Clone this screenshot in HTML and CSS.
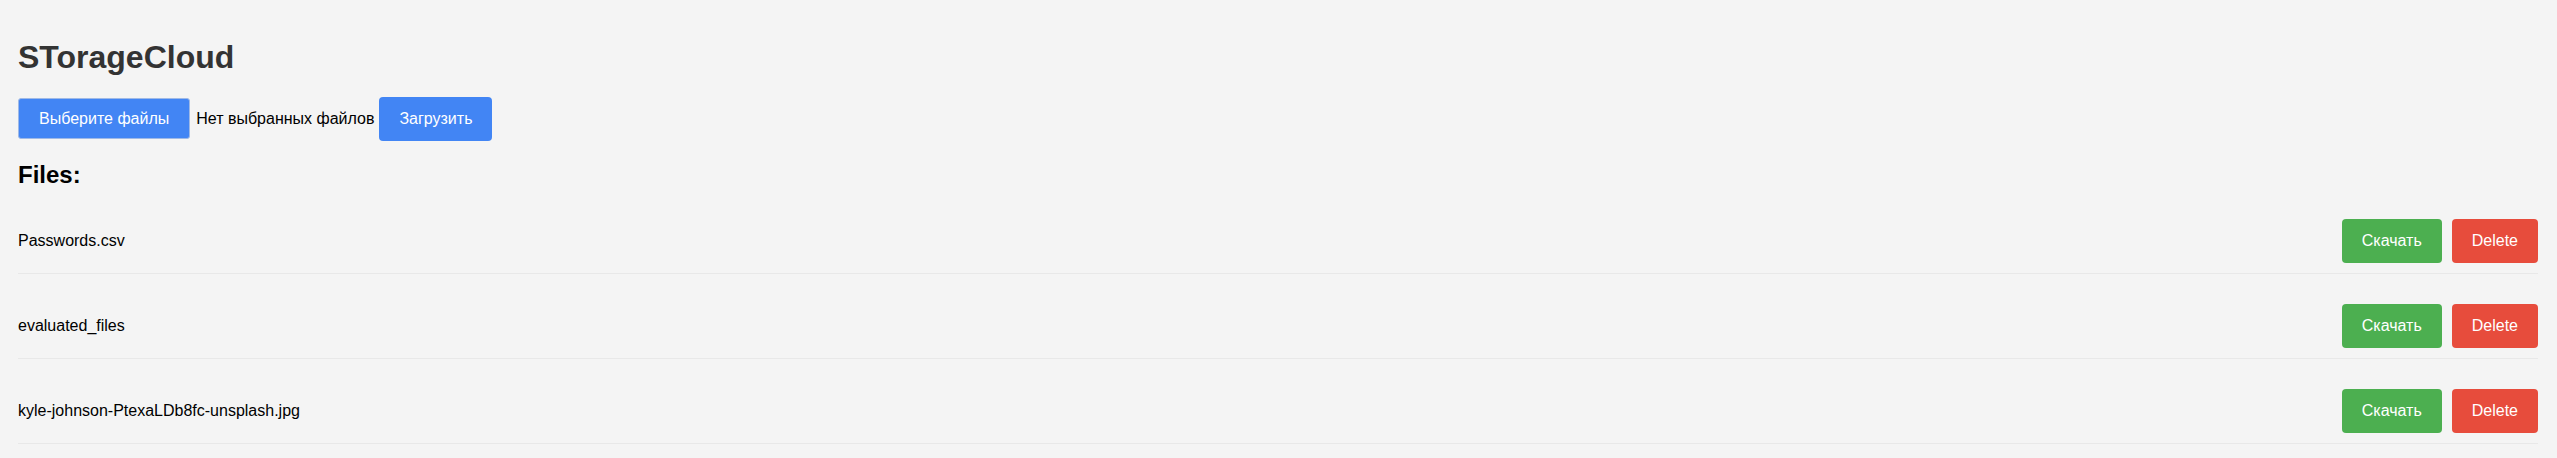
FILE: index.html
```html
<!DOCTYPE html>
<html lang="ru">
<head>
<meta charset="utf-8">
<title>STorageCloud</title>
<link rel="stylesheet" href="styles.css">
</head>
<body>
<div class="page">
  <h1 class="title">STorageCloud</h1>
  <form class="upload">
    <label class="file-btn">Выберите файлы</label><span class="file-status">Нет выбранных файлов</span>
    <button type="button" class="btn btn-blue">Загрузить</button>
  </form>
  <h2 class="files-title">Files:</h2>
  <ul class="file-list">
    <li class="file-row">
      <span class="file-name">Passwords.csv</span>
      <div class="actions">
        <button type="button" class="btn btn-green">Скачать</button>
        <button type="button" class="btn btn-red">Delete</button>
      </div>
    </li>
    <li class="file-row">
      <span class="file-name">evaluated_files</span>
      <div class="actions">
        <button type="button" class="btn btn-green">Скачать</button>
        <button type="button" class="btn btn-red">Delete</button>
      </div>
    </li>
    <li class="file-row">
      <span class="file-name">kyle-johnson-PtexaLDb8fc-unsplash.jpg</span>
      <div class="actions">
        <button type="button" class="btn btn-green">Скачать</button>
        <button type="button" class="btn btn-red">Delete</button>
      </div>
    </li>
  </ul>
</div>
</body>
</html>
```

FILE: styles.css
```css
html, body {
  margin: 0;
  padding: 0;
  background: #f4f4f4;
}

body {
  font-family: "Liberation Sans", Arial, Helvetica, sans-serif;
  font-size: 16px;
  color: #000;
}

.page {
  padding: 18px 19px 0 18px;
}

.title {
  font-size: 32px;
  font-weight: bold;
  color: #333;
  margin: 21px 0 21px;
}

.upload {
  display: flex;
  align-items: baseline;
  margin: 0;
}

.file-btn {
  display: inline-block;
  background: #4285f4;
  color: #fff;
  border: 1px solid #9fb9e6;
  border-radius: 3px;
  padding: 10px 20px;
  line-height: 19px;
  margin-right: 6px;
  cursor: pointer;
}

.file-status {
  margin-right: 5px;
}

.btn {
  font-family: "Liberation Sans", Arial, Helvetica, sans-serif;
  font-size: 16px;
  line-height: 20px;
  color: #fff;
  border: none;
  border-radius: 4px;
  padding: 12px 20px;
  cursor: pointer;
}

.btn-blue {
  background: #4285f4;
}

.btn-green {
  background: #4caf50;
}

.btn-red {
  background: #e74c3c;
}

.files-title {
  font-size: 24px;
  font-weight: bold;
  margin: 20px 0 20px;
}

.file-list {
  list-style: none;
  margin: 0;
  padding: 0;
}

.file-row {
  display: flex;
  align-items: center;
  justify-content: space-between;
  padding: 10px 0;
  border-bottom: 1px solid #e8e8e8;
  margin-top: 20px;
}

.actions {
  display: flex;
  gap: 10px;
}
```
